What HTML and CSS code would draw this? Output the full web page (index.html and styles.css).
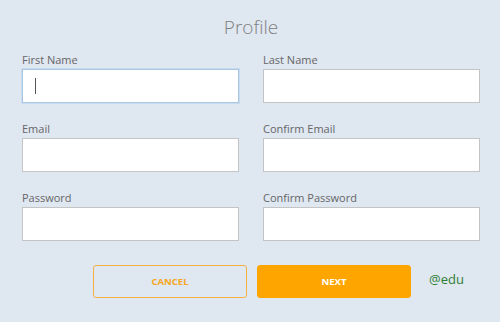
FILE: index.html
```html
<!DOCTYPE html>
<html lang="en">
<head>
    <meta charset="UTF-8">
    <meta name="viewport" content="width=device-width, initial-scale=1.0">
    <title>Profile</title>
    <link rel="stylesheet" href="styles.css">
</head>
<body>
    <div class="profile">
        <h1 class="title">Profile</h1>
        <form class="profile-form">
            <div class="field">
                <label>First Name</label>
                <div class="input focused"><span class="caret"></span></div>
            </div>
            <div class="field">
                <label>Last Name</label>
                <div class="input"></div>
            </div>
            <div class="field">
                <label>Email</label>
                <div class="input"></div>
            </div>
            <div class="field">
                <label>Confirm Email</label>
                <div class="input"></div>
            </div>
            <div class="field">
                <label>Password</label>
                <div class="input"></div>
            </div>
            <div class="field">
                <label>Confirm Password</label>
                <div class="input"></div>
            </div>
        </form>
        <div class="actions">
            <button class="btn btn-cancel">CANCEL</button>
            <button class="btn btn-next">NEXT</button>
            <span class="edu">@edu</span>
        </div>
    </div>
</body>
</html>
```

FILE: styles.css
```css
body {
    font-family: "Open Sans", Arial, sans-serif;
    margin: 0;
    padding: 0;
    background-color: #dfe7f1;
    color: #666;
}

.profile {
    padding: 0 20px 0 22px;
}

.title {
    margin: 0;
    padding-top: 14px;
    height: 27px;
    font-size: 19px;
    font-weight: 300;
    color: #808080;
    text-align: center;
    line-height: 27px;
}

.profile-form {
    display: grid;
    grid-template-columns: 217px 217px;
    column-gap: 24px;
    row-gap: 18px;
    margin-top: 11px;
}

.field label {
    display: block;
    font-size: 11px;
    line-height: 15px;
    color: #666;
    margin-bottom: 2px;
}

.input {
    height: 32px;
    background-color: #fff;
    border: 1px solid #c4c4c4;
    display: flex;
    align-items: center;
}

.input.focused {
    border-color: #a9c6e3;
    box-shadow: 0 0 0 1px #c9dcef;
}

.caret {
    width: 1px;
    height: 16px;
    background-color: #555;
    margin-left: 12px;
}

.actions {
    display: flex;
    align-items: center;
    margin-top: 24px;
    padding-left: 71px;
}

.btn {
    width: 154px;
    height: 33px;
    border-radius: 3px;
    font-family: "Open Sans", Arial, sans-serif;
    font-size: 9.5px;
    font-weight: 700;
    cursor: pointer;
}

.btn-cancel {
    background: transparent;
    border: 1px solid #f5b041;
    color: #f5a623;
}

.btn-next {
    margin-left: 10px;
    background-color: #ffa500;
    border: 1px solid #ffa500;
    color: #fff;
}

.edu {
    margin-left: 18px;
    font-size: 13px;
    color: #2e7d32;
    margin-top: -6px;
}
```
